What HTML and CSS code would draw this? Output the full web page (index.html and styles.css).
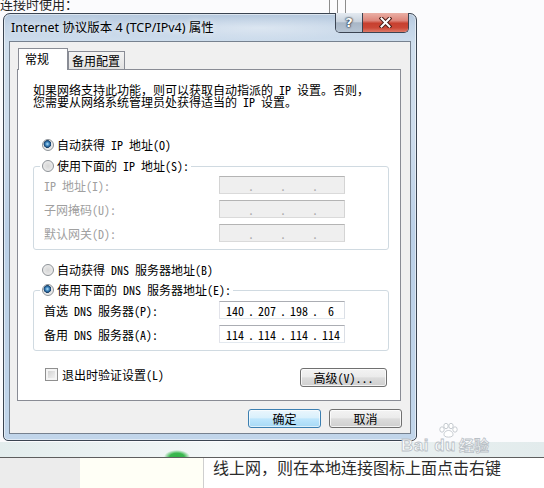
FILE: index.html
```html
<!DOCTYPE html>
<html lang="zh-CN">
<head>
<meta charset="utf-8">
<title>Internet 协议版本 4 (TCP/IPv4) 属性</title>
<link rel="stylesheet" href="styles.css">
</head>
<body>
<div class="screen">
  <div class="desk">
    <div class="bg-caption">连接时使用：</div>
    <div class="bg-frame"></div>
    <div class="band"></div>

    <section class="dialog">
      <header class="titlebar">
        <span class="title">Internet 协议版本 4 (TCP/IPv4) 属性</span>
        <div class="caption-btns">
          <button class="cap help">?</button>
          <button class="cap close" aria-label="关闭">
            <svg width="13" height="11" viewBox="0 0 13 11"><path d="M2.5 1.5 L10.5 9.5 M10.5 1.5 L2.5 9.5" stroke="#4a1c16" stroke-width="4" stroke-linecap="square"/><path d="M2.5 1.5 L10.5 9.5 M10.5 1.5 L2.5 9.5" stroke="#ffffff" stroke-width="2" stroke-linecap="square"/></svg>
          </button>
        </div>
      </header>

      <div class="client">
        <div class="tabs">
          <div class="tab active">常规</div>
          <div class="tab">备用配置</div>
        </div>

        <div class="panel">
          <p class="desc"><span class="dl">如果网络支持此功能，则可以获取自动指派的 IP 设置。否则，</span><span class="dl">您需要从网络系统管理员处获得适当的 IP 设置。</span></p>

          <label class="opt first"><input type="radio" name="ip" checked><span>自动获得 IP 地址(O)</span></label>

          <fieldset class="group g1">
            <legend><label class="opt"><input type="radio" name="ip"><span>使用下面的 IP 地址(S):</span></label></legend>
            <div class="row off"><span class="lbl">IP 地址(I):</span>
              <div class="field"><span class="seg"></span><span class="dot">.</span><span class="seg"></span><span class="dot">.</span><span class="seg"></span><span class="dot">.</span><span class="seg"></span></div></div>
            <div class="row off"><span class="lbl">子网掩码(U):</span>
              <div class="field"><span class="seg"></span><span class="dot">.</span><span class="seg"></span><span class="dot">.</span><span class="seg"></span><span class="dot">.</span><span class="seg"></span></div></div>
            <div class="row off"><span class="lbl">默认网关(D):</span>
              <div class="field"><span class="seg"></span><span class="dot">.</span><span class="seg"></span><span class="dot">.</span><span class="seg"></span><span class="dot">.</span><span class="seg"></span></div></div>
          </fieldset>

          <label class="opt sep"><input type="radio" name="dns"><span>自动获得 DNS 服务器地址(B)</span></label>

          <fieldset class="group g2">
            <legend><label class="opt"><input type="radio" name="dns" checked><span>使用下面的 DNS 服务器地址(E):</span></label></legend>
            <div class="row"><span class="lbl">首选 DNS 服务器(P):</span>
              <div class="field"><span class="seg">140</span><span class="dot">.</span><span class="seg">207</span><span class="dot">.</span><span class="seg">198</span><span class="dot">.</span><span class="seg">6</span></div></div>
            <div class="row"><span class="lbl">备用 DNS 服务器(A):</span>
              <div class="field"><span class="seg">114</span><span class="dot">.</span><span class="seg">114</span><span class="dot">.</span><span class="seg">114</span><span class="dot">.</span><span class="seg">114</span></div></div>
          </fieldset>

          <div class="foot-row">
            <label class="check"><input type="checkbox"><span>退出时验证设置(L)</span></label>
            <button class="btn adv">高级(V)...</button>
          </div>
        </div>

        <div class="actions">
          <button class="btn default">确定</button>
          <button class="btn">取消</button>
        </div>
      </div>
    </section>

    <div class="watermark">
      <svg class="paw" width="22" height="15" viewBox="0 0 22 15">
        <g fill="#ffffff" stroke="#bfc5cb" stroke-width="0.9">
          <ellipse cx="5" cy="6.5" rx="2.2" ry="2.7"/>
          <ellipse cx="9" cy="3" rx="2.2" ry="2.7"/>
          <ellipse cx="14" cy="3" rx="2.2" ry="2.7"/>
          <ellipse cx="18" cy="6.5" rx="2.2" ry="2.7"/>
          <path d="M11.5 7.5 C8 7.5 6 11 7.5 13 C9 14.5 14 14.5 15.5 13 C17 11 15 7.5 11.5 7.5 Z"/>
        </g>
      </svg>
      <div class="wm-text"><span class="wm-latin">Bai du</span><span class="wm-cjk">经验</span></div>
    </div>
  </div>

  <div class="lower">
    <div class="l-grey"></div>
    <div class="l-cream"></div>
    <div class="l-text">线上网，则在本地连接图标上面点击右键</div>
  </div>
</div>
</body>
</html>
```

FILE: styles.css
```css
* { box-sizing: border-box; }

body {
  margin: 0;
  background: #fbfbfd;
  font-family: "Noto Sans Mono CJK SC", "Noto Sans CJK SC", monospace;
}

.screen {
  width: 544px;
  height: 488px;
  overflow: hidden;
  display: flex;
  flex-direction: column;
}

/* ---------- background desktop ---------- */
.desk {
  position: relative;
  height: 457px;
  flex: none;
  display: flex;
  flex-direction: column;
}

.bg-caption {
  font: 13px/13px "Noto Sans CJK SC", sans-serif;
  color: #222;
  margin-top: -3px;
  white-space: nowrap;
}

.bg-frame {
  position: absolute;
  left: 329px;
  top: 0;
  width: 17px;
  height: 13px;
  border-left: 1px solid #8c8c8c;
  border-right: 1px solid #8c8c8c;
  background: linear-gradient(90deg, transparent 7px, #8c8c8c 7px, #8c8c8c 8px, transparent 8px);
}

.band {
  margin-top: auto;
  height: 15px;
  background:
    radial-gradient(ellipse 13px 7px at 177px 100%, #35b24a 0, #3bb84f 55%, rgba(60, 185, 80, 0) 100%),
    linear-gradient(90deg, #e3eded 0, #f3f7f7 40%, #edf3f3 60%, #e2ebec 100%);
}

/* ---------- dialog window ---------- */
.dialog {
  position: absolute;
  left: 3px;
  top: 13px;
  width: 414px;
  height: 428px;
  border: 1px solid #3a4451;
  border-radius: 7px 7px 5px 5px;
  padding: 0 5px 6px 5px;
  display: flex;
  flex-direction: column;
  background: linear-gradient(180deg, #b6c9de 0, #c3d4e7 12px, #cfdeed 30px, #cddcec 120px, #bbd0e7 220px, #c1d5ea 100%);
  box-shadow: inset 0 0 0 1px rgba(255, 255, 255, 0.5);
}

.titlebar {
  height: 27px;
  display: flex;
  align-items: center;
  padding-left: 2px;
  background: radial-gradient(ellipse 130px 12px at 250px 14px, rgba(255, 255, 255, 0.4), rgba(255, 255, 255, 0));
}

.title {
  font: 12.5px/16px "Noto Sans", "Noto Sans CJK SC", sans-serif;
  color: #000;
  white-space: nowrap;
  text-shadow: 0 0 6px rgba(255, 255, 255, 0.9);
}

.caption-btns {
  margin-left: auto;
  margin-right: 2px;
  align-self: flex-start;
  margin-top: -1px;
  width: 74px;
  height: 20px;
  display: flex;
  border: 1px solid #3b4452;
  border-top: none;
  border-radius: 0 0 5px 5px;
  overflow: hidden;
}

.cap {
  margin: 0;
  padding: 0;
  border: none;
  height: 100%;
  display: flex;
  align-items: center;
  justify-content: center;
}

.cap.help {
  width: 27px;
  border-right: 1px solid #3b4452;
  background: linear-gradient(180deg, #e4eaf1 0, #c9d3de 45%, #a8b6c6 52%, #b6c4d3 100%);
  color: #fff;
  font: bold 13px/1 "DejaVu Sans", sans-serif;
  text-shadow: 0 0 1px #1f2a38, 0 0 2px #2c3a4c, 0 0 2px #2c3a4c;
}

.cap.close {
  flex: 1;
  background: linear-gradient(180deg, #eab0a6 0, #dd857a 40%, #c7402f 54%, #cb4837 78%, #df7a68 100%);
}

/* ---------- client area ---------- */
.client {
  flex: 1;
  border: 1px solid #76818f;
  background: #f0f0f0;
  padding: 6px 8px 5px 7px;
  display: flex;
  flex-direction: column;
}

.tabs {
  height: 21px;
  display: flex;
  align-items: flex-end;
  padding-left: 1px;
}

.tab {
  font: 12px/17px "Noto Sans CJK SC", sans-serif;
  color: #000;
  height: 18px;
  width: 57px;
  padding-left: 3px;
  border: 1px solid #898c95;
  border-bottom: none;
  background: linear-gradient(180deg, #f3f3f3, #e2e2e2);
  white-space: nowrap;
}

.tab.active {
  width: 50px;
  height: 22px;
  padding-left: 6px;
  line-height: 20px;
  margin-bottom: -1px;
  background: #fff;
  position: relative;
  z-index: 1;
}

.panel {
  height: 332px;
  margin-right: 1px;
  border: 1px solid #898c95;
  background: #fff;
  padding: 14px 11px 0 15px;
  font-size: 12px;
  color: #000;
}

.desc {
  margin: 0;
  display: flex;
  flex-direction: column;
  gap: 1px;
  white-space: nowrap;
}

.dl {
  display: block;
  font-size: 12px;
  line-height: 11px;
}

.opt {
  display: flex;
  align-items: center;
  gap: 3px;
  height: 14px;
  line-height: 14px;
  white-space: nowrap;
}

.opt.first { margin: 31px 0 0 9px; }
.opt.sep { margin: 13px 0 0 9px; }

input[type="radio"] {
  appearance: none;
  -webkit-appearance: none;
  margin: 0;
  width: 12px;
  height: 12px;
  flex: none;
  border: 1px solid #8d9297;
  border-radius: 50%;
  background: radial-gradient(circle at 50% 50%, #d6d6d6 0, #e2e2e2 45%, #f6f6f6 100%);
}

input[type="radio"]:checked {
  background:
    radial-gradient(circle at 44% 40%, #b8e2f8 0, #4e95cb 1.6px, #1f5588 3px, #183f66 3.6px, rgba(24, 63, 102, 0) 4.1px),
    radial-gradient(circle at 50% 50%, #d6d6d6 0, #e2e2e2 45%, #f6f6f6 100%);
}

.group {
  margin: 7px 0 0;
  padding: 3px 0 7px;
  border: 1px solid #d0dae1;
  border-radius: 3px;
  min-width: 0;
}

.group.g2 {
  margin-top: 6px;
  padding-top: 4px;
}

.group legend {
  margin-left: 6px;
  padding: 0 2px;
}

.row {
  display: flex;
  align-items: center;
  height: 18px;
  padding-left: 10px;
  white-space: nowrap;
}

.row + .row { margin-top: 6px; }

.lbl { width: 175px; }

.row.off .lbl { color: #a0a0a0; }

.field {
  width: 126px;
  height: 18px;
  display: flex;
  align-items: center;
  padding-left: 2px;
  border: 1px solid;
  border-color: #abadb3 #dbdfe6 #e3e9ef #e2e3ea;
  background: #fff;
  color: #000;
}

.row.off .field {
  background: #efefef;
  border-color: #b4b4b4 #d4d4d4 #dadada #d4d4d4;
  color: #aaa;
}

.seg {
  width: 26px;
  text-align: center;
}

.dot {
  width: 6px;
  text-align: center;
}

.foot-row {
  display: flex;
  justify-content: space-between;
  align-items: flex-start;
  margin: 17px 2px 0 0;
}

.check {
  display: flex;
  align-items: center;
  gap: 4px;
  height: 14px;
  margin: -1px 0 0 12px;
  white-space: nowrap;
}

input[type="checkbox"] {
  appearance: none;
  -webkit-appearance: none;
  margin: 0;
  width: 13px;
  height: 13px;
  flex: none;
  border: 1px solid #8f8f8f;
  background: linear-gradient(135deg, #c9c9c9 0, #e6e6e6 60%, #f6f6f6 100%);
  box-shadow: inset 0 0 0 2px #f4f4f4;
}

/* ---------- buttons ---------- */
.btn {
  margin: 0;
  padding: 0;
  height: 19px;
  border: 1px solid #707070;
  border-radius: 3px;
  background: linear-gradient(180deg, #f3f3f3 0, #ebebeb 46%, #dcdcdc 52%, #cfcfcf 100%);
  box-shadow: inset 0 0 0 1px rgba(255, 255, 255, 0.75);
  font: 12px/17px "Noto Sans CJK SC", sans-serif;
  color: #000;
}

.btn.adv {
  width: 87px;
  font-family: "Noto Sans Mono CJK SC", "Noto Sans CJK SC", monospace;
}

.btn.default {
  border-color: #3c7fb1;
  background: linear-gradient(180deg, #eaf6fd 0, #d9f0fc 46%, #bee6fd 52%, #a7d9f5 100%);
  box-shadow: inset 0 0 0 1px rgba(255, 255, 255, 0.6);
}

.actions {
  display: flex;
  justify-content: flex-end;
  gap: 8px;
  margin-top: 8px;
}

.actions .btn { width: 73px; }

/* ---------- watermark ---------- */
.watermark {
  position: absolute;
  left: 401px;
  top: 423px;
  display: flex;
  flex-direction: column;
  pointer-events: none;
}

.paw { margin-left: 36px; }

.wm-text {
  display: flex;
  align-items: baseline;
  margin-top: -1px;
  white-space: nowrap;
  color: rgba(255, 255, 255, 0.85);
  -webkit-text-stroke: 0.8px #b9c0c6;
}

.wm-latin {
  font: bold 17px/15px "Liberation Sans", sans-serif;
  letter-spacing: 0.5px;
}

.wm-cjk {
  font: bold 15px/15px "Noto Sans CJK SC", sans-serif;
  margin-left: 3px;
}

/* ---------- lower page ---------- */
.lower {
  flex: 1;
  display: flex;
  border-top: 1px solid #5e5e5e;
}

.l-grey {
  width: 80px;
  background: #ececec;
}

.l-cream {
  width: 124px;
  background: #fffff6;
  border-right: 1px solid #cfcfcf;
}

.l-text {
  flex: 1;
  background: #fff;
  padding-left: 9px;
  font: 16px/18px "Noto Sans CJK SC", sans-serif;
  color: #2b2b2b;
  white-space: nowrap;
}
```
